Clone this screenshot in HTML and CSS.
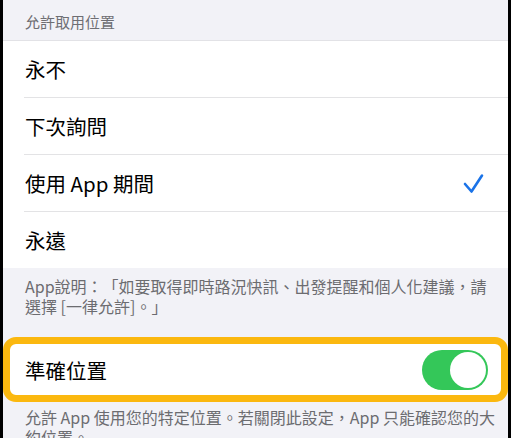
FILE: index.html
```html
<!DOCTYPE html>
<html>
<head>
    <title>位置</title>
    <link rel="stylesheet" href="styles.css">
</head>
<body>
    <div id="screen">
        <div class="groupHeader">允許取用位置</div>
        <div class="list">
            <div class="row"><div class="rowInner">永不</div></div>
            <div class="row"><div class="rowInner">下次詢問</div></div>
            <div class="row">
                <div class="rowInner">
                    <span>使用 App 期間</span>
                    <svg class="check" width="21" height="21" viewBox="0 0 21 21">
                        <path d="M2 11 L8.5 18.5 L19 2.5" fill="none" stroke="#1a73e8" stroke-width="2.6" stroke-linecap="round" stroke-linejoin="round"/>
                    </svg>
                </div>
            </div>
            <div class="row"><div class="rowInner">永遠</div></div>
        </div>
        <div class="groupFooter">App說明：「如要取得即時路況快訊、出發提醒和個人化建議，請選擇 [一律允許]。」</div>

        <div class="highlight">
            <div class="toggleRow">
                <span>準確位置</span>
                <div class="toggle on"><div class="knob"></div></div>
            </div>
        </div>
        <div class="groupFooter bottomNote">允許 App 使用您的特定位置。若關閉此設定，App 只能確認您的大約位置。</div>
    </div>
</body>
</html>
```

FILE: styles.css
```css
html, body {
    padding: 0;
    margin: 0;
    background: #000;
    font-family: "Noto Sans CJK TC", "Noto Sans", sans-serif;
    text-spacing-trim: space-all;
}
#screen {
    margin: 0 3px;
    height: 438px;
    overflow: hidden;
    background: #f2f2f7;
}
.groupHeader {
    height: 40px;
    padding-left: 22px;
    display: flex;
    align-items: center;
    font-size: 15px;
    color: #6e6e73;
    box-sizing: border-box;
    padding-top: 3px;
}
.list {
    background: white;
    border-top: 1px solid #e2e2e6;
}
.row {
    padding-left: 21px;
}
.rowInner {
    height: 56px;
    display: flex;
    align-items: center;
    justify-content: space-between;
    padding-left: 1px;
    padding-right: 24px;
    border-bottom: 1px solid #e3e3e5;
    font-size: 20.5px;
    color: #000;
}
.row:last-child .rowInner {
    border-bottom: none;
}
.check {
    margin-top: 1px;
}
.groupFooter {
    padding: 8px 10px 0 22px;
    font-size: 16px;
    line-height: 20px;
    color: #6c6c70;
}
.highlight {
    margin-top: 21px;
    border: 7px solid #fbb80f;
    border-radius: 13px;
    background: white;
}
.toggleRow {
    height: 51px;
    display: flex;
    align-items: center;
    justify-content: space-between;
    padding-left: 15px;
    padding-right: 13px;
    font-size: 20.5px;
    color: #000;
}
.toggle {
    width: 66px;
    height: 40px;
    border-radius: 20px;
    background: #34c759;
    display: flex;
    align-items: center;
    justify-content: flex-end;
    padding: 0 2px;
    box-sizing: border-box;
}
.knob {
    width: 36px;
    height: 36px;
    border-radius: 50%;
    background: white;
}
.bottomNote {
    padding-top: 5px;
}
```
